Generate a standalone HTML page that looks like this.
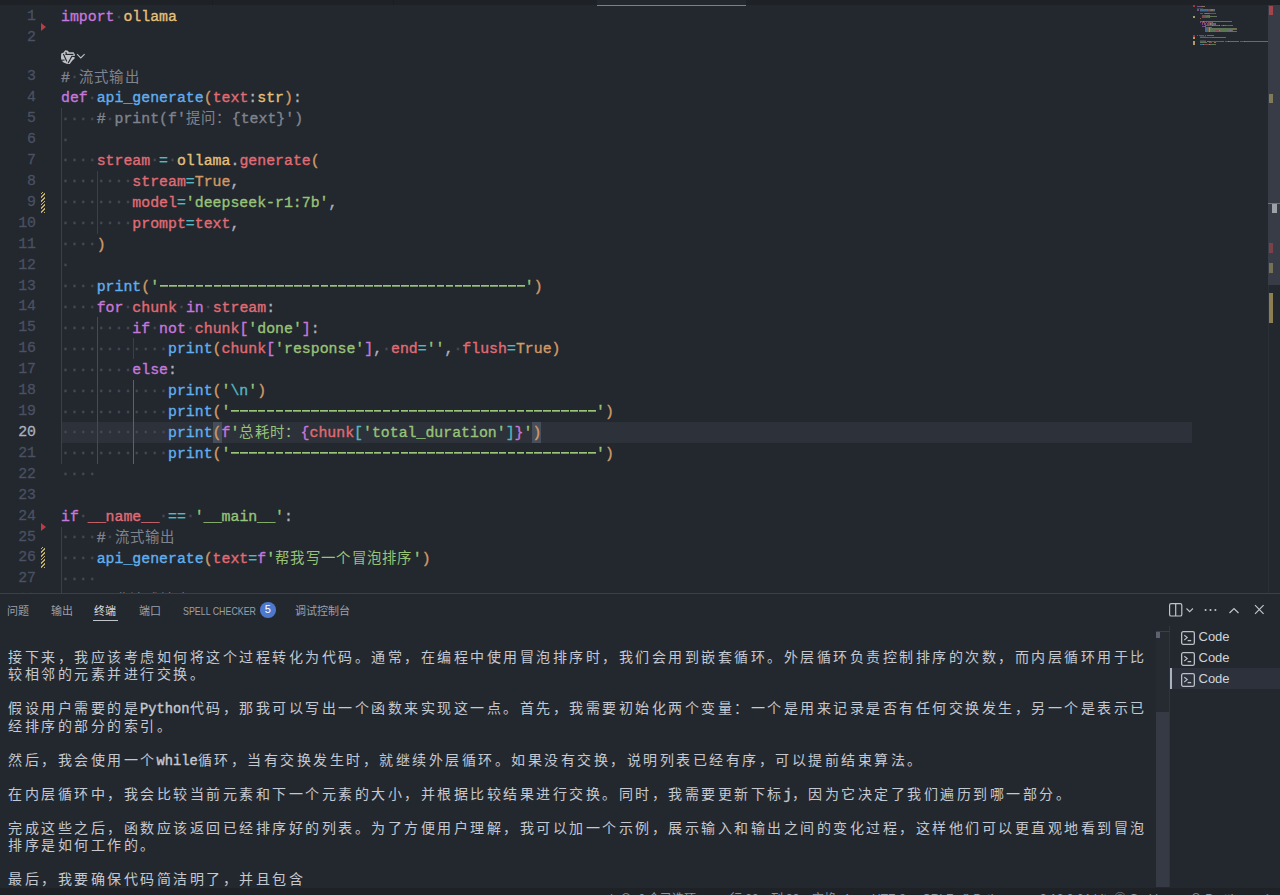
<!DOCTYPE html>
<html lang="zh-CN"><head><meta charset="utf-8">
<style>
html,body{margin:0;padding:0}
body{width:1280px;height:895px;overflow:hidden;background:#23272e;position:relative;font-family:"Liberation Sans",sans-serif}
.topband{position:absolute;left:0;top:0;width:1280px;height:5px;background:#1e2227}
.acttab{position:absolute;left:597px;top:0;width:149px;height:5px;background:#23272e;border-bottom:1px solid #7d8086}
.ed{position:absolute;left:0;top:5px;width:1280px;height:588px;overflow:hidden}
.edin{position:absolute;left:0;top:-5px;width:1280px;height:600px}
.ln{position:absolute;left:0;width:36px;text-align:right;color:#495162;font-family:"Liberation Mono",monospace;font-size:14.875px;line-height:20.92px;height:20.92px;white-space:pre;-webkit-text-stroke:0.3px currentColor}
.ln.act{color:#abb2bf}
.cl{position:absolute;z-index:1;left:61px;font-family:"Liberation Mono",monospace;font-size:14.875px;line-height:20.92px;height:20.92px;white-space:pre;color:#abb2bf;-webkit-text-stroke:0.35px currentColor}
.ws{color:#454a55;position:relative;top:-0.7px}
.dash{color:transparent;-webkit-text-stroke:0;background:repeating-linear-gradient(90deg,#98c379 0 7.7px,transparent 7.7px 8.925px) 0.6px 6.2px/100% 1.7px no-repeat}
.cj{font-style:normal;display:inline-block;width:15.3px;font-size:14.4px;-webkit-text-stroke:0}
.lhl{position:absolute;left:61px;width:1131px;height:20.92px;background:#2c313a}
.bx{position:relative}
.bx::before{content:"";position:absolute;left:0;top:-3.2px;width:100%;height:20.7px;background:#474e5b;z-index:-1}
.ig{position:absolute;width:1px;background:#3b4048}
.iga{background:#5c6370}
.igm{background:#454b56}
.glyph-del{position:absolute;left:41px;width:0;height:0;border-top:4px solid transparent;border-bottom:4px solid transparent;border-left:5px solid #b93c47}
.glyph-mod{position:absolute;left:41px;width:4px;background:repeating-linear-gradient(-45deg,#bfae6c 0 1.3px,#2a2c2e 1.3px 2.6px)}
.minimap{position:absolute;left:1192px;top:5px;width:76px;height:588px;overflow:hidden}
.sb{position:absolute;left:1268px;top:5px;width:12px;height:588px;background:#23272e;border-left:1px solid #2b2f36;box-sizing:border-box}
.sbslider{position:absolute;left:1268px;top:5px;width:12px;height:280px;background:#383c46}
.panel{position:absolute;left:0;top:593px;width:1280px;height:302px;background:#23272e;border-top:1px solid #3a3f4b;box-sizing:border-box}
.ptab{position:absolute;top:605px;font-size:11px;color:#9aa0ab;line-height:13px;white-space:nowrap}
.ptab.act{color:#d7dae0}
.tl{position:absolute;left:8px;height:17px;line-height:17px;white-space:pre;color:#c3c8d1;font-family:"Liberation Mono",monospace;font-size:13.75px}
.tcj{font-style:normal;display:inline-block;width:16.5px;font-size:14px;font-weight:300}
.tas{-webkit-text-stroke:0.4px currentColor}
.tsb{position:absolute;left:1156px;top:631px;width:14px;height:256px;background:#262a31}
.tsbslider{position:absolute;left:1156px;top:712px;width:14px;height:175px;background:#353a45}
.tabsep{position:absolute;left:1169px;top:626px;width:1px;height:261px;background:#2f343d}
.ttab{position:absolute;left:1170px;width:110px;height:21px}
.ttab.act{background:#2c313c}
.ttab .bar{position:absolute;left:0;top:0;width:2px;height:21px;background:#abb2bf}
.ttab .ic2{position:absolute;left:9.5px;top:3.5px}
.ttab .ic{position:absolute;left:10px;top:3px;width:12px;height:12px;border:1.3px solid #b9bec7;border-radius:2px}
.ttab .tx{position:absolute;left:28.5px;top:3px;font-size:13px;line-height:15px;color:#d0d4da}
.mm{position:absolute;height:1.2px}
.ovr{position:absolute}
.pic{position:absolute}
.status{position:absolute;left:0;top:888px;width:1280px;height:22px;background:#1e2227}
</style></head><body>
<div class="topband"></div>
<div class="acttab"></div>
<div style="position:absolute;left:212px;top:0;width:1px;height:5px;background:#1a1d22"></div>
<div style="position:absolute;left:393px;top:0;width:1px;height:5px;background:#1a1d22"></div>
<div class="ed"><div class="edin">
<div class="lhl" style="top:421.94px"></div>
<div class="ln" style="top:6.06px">1</div>
<div class="cl" style="top:7.26px"><span style="color:#c678dd">import</span><span class="ws">·</span><span style="color:#e5c07b">ollama</span></div>
<div class="ln" style="top:26.98px">2</div>
<div class="cl" style="top:28.18px"></div>
<div class="ln" style="top:66.30px">3</div>
<div class="cl" style="top:67.50px"><span style="color:#7f848e">#</span><span class="ws">·</span><span style="color:#7f848e"><i class="cj">流</i><i class="cj">式</i><i class="cj">输</i><i class="cj">出</i></span></div>
<div class="ln" style="top:87.22px">4</div>
<div class="cl" style="top:88.42px"><span style="color:#c678dd">def</span><span class="ws">·</span><span style="color:#61afef">api_generate</span><span style="color:#d19a66">(</span><span style="color:#e06c75">text</span><span style="color:#abb2bf">:</span><span style="color:#e5c07b">str</span><span style="color:#d19a66">)</span><span style="color:#abb2bf">:</span></div>
<div class="ln" style="top:108.14px">5</div>
<div class="cl" style="top:109.34px"><span class="ws">····</span><span style="color:#7f848e">#</span><span class="ws">·</span><span style="color:#7f848e">print(f&#x27;<i class="cj">提</i><i class="cj">问</i><i class="cj">：</i>{text}&#x27;)</span></div>
<div class="ln" style="top:129.06px">6</div>
<div class="cl" style="top:130.26px"><span class="ws">·</span></div>
<div class="ln" style="top:149.98px">7</div>
<div class="cl" style="top:151.18px"><span class="ws">····</span><span style="color:#e06c75">stream</span><span class="ws">·</span><span style="color:#56b6c2">=</span><span class="ws">·</span><span style="color:#e5c07b">ollama</span><span style="color:#abb2bf">.</span><span style="color:#e06c75">generate</span><span style="color:#d19a66">(</span></div>
<div class="ln" style="top:170.90px">8</div>
<div class="cl" style="top:172.10px"><span class="ws">········</span><span style="color:#e06c75">stream</span><span style="color:#56b6c2">=</span><span style="color:#d19a66">True</span><span style="color:#abb2bf">,</span></div>
<div class="ln" style="top:191.82px">9</div>
<div class="cl" style="top:193.02px"><span class="ws">········</span><span style="color:#e06c75">model</span><span style="color:#56b6c2">=</span><span style="color:#98c379">&#x27;deepseek-r1:7b&#x27;</span><span style="color:#abb2bf">,</span></div>
<div class="ln" style="top:212.74px">10</div>
<div class="cl" style="top:213.94px"><span class="ws">········</span><span style="color:#e06c75">prompt</span><span style="color:#56b6c2">=</span><span style="color:#e06c75">text</span><span style="color:#abb2bf">,</span></div>
<div class="ln" style="top:233.66px">11</div>
<div class="cl" style="top:234.86px"><span class="ws">····</span><span style="color:#d19a66">)</span></div>
<div class="ln" style="top:254.58px">12</div>
<div class="cl" style="top:255.78px"><span class="ws">·</span></div>
<div class="ln" style="top:275.50px">13</div>
<div class="cl" style="top:276.70px"><span class="ws">····</span><span style="color:#61afef">print</span><span style="color:#d19a66">(</span><span style="color:#98c379">&#x27;</span><span class="dash">-----------------------------------------</span><span style="color:#98c379">&#x27;</span><span style="color:#d19a66">)</span></div>
<div class="ln" style="top:296.42px">14</div>
<div class="cl" style="top:297.62px"><span class="ws">····</span><span style="color:#c678dd">for</span><span class="ws">·</span><span style="color:#e06c75">chunk</span><span class="ws">·</span><span style="color:#c678dd">in</span><span class="ws">·</span><span style="color:#e06c75">stream</span><span style="color:#abb2bf">:</span></div>
<div class="ln" style="top:317.34px">15</div>
<div class="cl" style="top:318.54px"><span class="ws">········</span><span style="color:#c678dd">if</span><span class="ws">·</span><span style="color:#c678dd">not</span><span class="ws">·</span><span style="color:#e06c75">chunk</span><span style="color:#c678dd">[</span><span style="color:#98c379">&#x27;done&#x27;</span><span style="color:#c678dd">]</span><span style="color:#abb2bf">:</span></div>
<div class="ln" style="top:338.26px">16</div>
<div class="cl" style="top:339.46px"><span class="ws">············</span><span style="color:#61afef">print</span><span style="color:#d19a66">(</span><span style="color:#e06c75">chunk</span><span style="color:#c678dd">[</span><span style="color:#98c379">&#x27;response&#x27;</span><span style="color:#c678dd">]</span><span style="color:#abb2bf">,</span><span class="ws">·</span><span style="color:#e06c75">end</span><span style="color:#56b6c2">=</span><span style="color:#98c379">&#x27;&#x27;</span><span style="color:#abb2bf">,</span><span class="ws">·</span><span style="color:#e06c75">flush</span><span style="color:#56b6c2">=</span><span style="color:#d19a66">True</span><span style="color:#d19a66">)</span></div>
<div class="ln" style="top:359.18px">17</div>
<div class="cl" style="top:360.38px"><span class="ws">········</span><span style="color:#c678dd">else</span><span style="color:#abb2bf">:</span></div>
<div class="ln" style="top:380.10px">18</div>
<div class="cl" style="top:381.30px"><span class="ws">············</span><span style="color:#61afef">print</span><span style="color:#d19a66">(</span><span style="color:#98c379">&#x27;</span><span style="color:#56b6c2">\n</span><span style="color:#98c379">&#x27;</span><span style="color:#d19a66">)</span></div>
<div class="ln" style="top:401.02px">19</div>
<div class="cl" style="top:402.22px"><span class="ws">············</span><span style="color:#61afef">print</span><span style="color:#d19a66">(</span><span style="color:#98c379">&#x27;</span><span class="dash">-----------------------------------------</span><span style="color:#98c379">&#x27;</span><span style="color:#d19a66">)</span></div>
<div class="ln act" style="top:421.94px">20</div>
<div class="cl" style="top:423.14px"><span class="ws">············</span><span style="color:#61afef">print</span><span class="bx" style="color:#d19a66">(</span><span style="color:#c678dd">f</span><span style="color:#98c379">&#x27;<i class="cj">总</i><i class="cj">耗</i><i class="cj">时</i><i class="cj">：</i></span><span style="color:#c678dd">{</span><span style="color:#e06c75">chunk</span><span style="color:#56b6c2">[</span><span style="color:#98c379">&#x27;total_duration&#x27;</span><span style="color:#56b6c2">]</span><span style="color:#c678dd">}</span><span style="color:#98c379">&#x27;</span><span class="bx" style="color:#d19a66">)</span></div>
<div class="ln" style="top:442.86px">21</div>
<div class="cl" style="top:444.06px"><span class="ws">············</span><span style="color:#61afef">print</span><span style="color:#d19a66">(</span><span style="color:#98c379">&#x27;</span><span class="dash">-----------------------------------------</span><span style="color:#98c379">&#x27;</span><span style="color:#d19a66">)</span></div>
<div class="ln" style="top:463.78px">22</div>
<div class="cl" style="top:464.98px"><span class="ws">····</span></div>
<div class="ln" style="top:484.70px">23</div>
<div class="cl" style="top:485.90px"></div>
<div class="ln" style="top:505.62px">24</div>
<div class="cl" style="top:506.82px"><span style="color:#c678dd">if</span><span class="ws">·</span><span style="color:#e06c75">__name__</span><span class="ws">·</span><span style="color:#56b6c2">==</span><span class="ws">·</span><span style="color:#98c379">&#x27;__main__&#x27;</span><span style="color:#abb2bf">:</span></div>
<div class="ln" style="top:526.54px">25</div>
<div class="cl" style="top:527.74px"><span class="ws">····</span><span style="color:#7f848e">#</span><span class="ws">·</span><span style="color:#7f848e"><i class="cj">流</i><i class="cj">式</i><i class="cj">输</i><i class="cj">出</i></span></div>
<div class="ln" style="top:547.46px">26</div>
<div class="cl" style="top:548.66px"><span class="ws">····</span><span style="color:#61afef">api_generate</span><span style="color:#d19a66">(</span><span style="color:#e06c75">text</span><span style="color:#56b6c2">=</span><span style="color:#c678dd">f</span><span style="color:#98c379">&#x27;<i class="cj">帮</i><i class="cj">我</i><i class="cj">写</i><i class="cj">一</i><i class="cj">个</i><i class="cj">冒</i><i class="cj">泡</i><i class="cj">排</i><i class="cj">序</i>&#x27;</span><span style="color:#d19a66">)</span></div>
<div class="ln" style="top:568.38px">27</div>
<div class="cl" style="top:569.58px"><span class="ws">····</span></div>
<div class="ln" style="top:589.30px">28</div>
<div class="cl" style="top:590.50px"><span class="ws">····</span><span style="color:#7f848e">#</span><span class="ws">·</span><span style="color:#7f848e"><i class="cj">非</i><i class="cj">流</i><i class="cj">式</i><i class="cj">输</i><i class="cj">出</i></span></div>
<div class="ig" style="left:61.0px;top:108.14px;height:355.64px"></div>
<div class="ig" style="left:97.0px;top:170.90px;height:62.76px"></div>
<div class="ig igm" style="left:97.0px;top:317.34px;height:146.44px"></div>
<div class="ig" style="left:133.0px;top:338.26px;height:20.92px"></div>
<div class="ig iga" style="left:133.0px;top:380.10px;height:83.68px"></div>
<div class="ig" style="left:61.0px;top:526.54px;height:83.68px"></div>
<div class="glyph-del" style="top:22.98px"></div>
<div class="glyph-del" style="top:522.54px"></div>
<div class="glyph-mod" style="top:191.82px;height:20.92px"></div>
<div class="glyph-mod" style="top:547.46px;height:20.92px"></div>
<svg class="lens" style="position:absolute;left:59px;top:48.00px" width="28" height="18" viewBox="0 0 28 18">
<path d="M6.2 2.2 L9 2.8 L9.8 4.2 L14.6 4.2 L15.9 6.6 L15.6 10.6 L13.2 12.8 L10.8 16 L7.6 15.8 L4.6 14.6 L2.4 12.6 L2 9.6 L2.2 5.6 L4.6 4.4 Z" fill="#bfc2c7"/>
<g stroke="#23272e" stroke-width="1.15" fill="none">
<path d="M6.4 6.4 L14.4 6.4"/>
<path d="M4.4 6.0 L7.8 13.4"/>
<path d="M13 8 L9.2 15"/>
<path d="M6.9 4.0 L7.3 6.2"/>
<path d="M1.8 12.4 L5.6 12.0"/>
<path d="M16 8.6 L12.8 8.2"/>
</g>
<path d="M18 6.2 L21.8 10 L25.6 6.2" fill="none" stroke="#b9bec7" stroke-width="1.1"/>
</svg>
</div></div>
<div class="mm" style="left:1197.00px;top:5.70px;width:3.84px;background:#c678dd;opacity:0.50"></div>
<div class="mm" style="left:1201.48px;top:5.70px;width:3.84px;background:#e5c07b;opacity:0.50"></div>
<div class="mm" style="left:1197.00px;top:8.22px;width:0.64px;background:#7f848e;opacity:0.30"></div>
<div class="mm" style="left:1198.28px;top:8.22px;width:5.12px;background:#7f848e;opacity:0.30"></div>
<div class="mm" style="left:1197.00px;top:9.48px;width:1.92px;background:#c678dd;opacity:0.50"></div>
<div class="mm" style="left:1199.56px;top:9.48px;width:7.68px;background:#61afef;opacity:0.50"></div>
<div class="mm" style="left:1207.24px;top:9.48px;width:0.64px;background:#d19a66;opacity:0.50"></div>
<div class="mm" style="left:1207.88px;top:9.48px;width:2.56px;background:#e06c75;opacity:0.50"></div>
<div class="mm" style="left:1210.44px;top:9.48px;width:0.64px;background:#abb2bf;opacity:0.50"></div>
<div class="mm" style="left:1211.08px;top:9.48px;width:1.92px;background:#e5c07b;opacity:0.50"></div>
<div class="mm" style="left:1213.00px;top:9.48px;width:0.64px;background:#d19a66;opacity:0.50"></div>
<div class="mm" style="left:1213.64px;top:9.48px;width:0.64px;background:#abb2bf;opacity:0.50"></div>
<div class="mm" style="left:1199.56px;top:10.74px;width:0.64px;background:#7f848e;opacity:0.30"></div>
<div class="mm" style="left:1200.84px;top:10.74px;width:14.08px;background:#7f848e;opacity:0.30"></div>
<div class="mm" style="left:1199.56px;top:13.26px;width:3.84px;background:#e06c75;opacity:0.50"></div>
<div class="mm" style="left:1204.04px;top:13.26px;width:0.64px;background:#56b6c2;opacity:0.50"></div>
<div class="mm" style="left:1205.32px;top:13.26px;width:3.84px;background:#e5c07b;opacity:0.50"></div>
<div class="mm" style="left:1209.16px;top:13.26px;width:0.64px;background:#abb2bf;opacity:0.50"></div>
<div class="mm" style="left:1209.80px;top:13.26px;width:5.12px;background:#e06c75;opacity:0.50"></div>
<div class="mm" style="left:1214.92px;top:13.26px;width:0.64px;background:#d19a66;opacity:0.50"></div>
<div class="mm" style="left:1202.12px;top:14.52px;width:3.84px;background:#e06c75;opacity:0.50"></div>
<div class="mm" style="left:1205.96px;top:14.52px;width:0.64px;background:#56b6c2;opacity:0.50"></div>
<div class="mm" style="left:1206.60px;top:14.52px;width:2.56px;background:#d19a66;opacity:0.50"></div>
<div class="mm" style="left:1209.16px;top:14.52px;width:0.64px;background:#abb2bf;opacity:0.50"></div>
<div class="mm" style="left:1202.12px;top:15.78px;width:3.20px;background:#e06c75;opacity:0.50"></div>
<div class="mm" style="left:1205.32px;top:15.78px;width:0.64px;background:#56b6c2;opacity:0.50"></div>
<div class="mm" style="left:1205.96px;top:15.78px;width:10.24px;background:#98c379;opacity:0.50"></div>
<div class="mm" style="left:1216.20px;top:15.78px;width:0.64px;background:#abb2bf;opacity:0.50"></div>
<div class="mm" style="left:1202.12px;top:17.04px;width:3.84px;background:#e06c75;opacity:0.50"></div>
<div class="mm" style="left:1205.96px;top:17.04px;width:0.64px;background:#56b6c2;opacity:0.50"></div>
<div class="mm" style="left:1206.60px;top:17.04px;width:2.56px;background:#e06c75;opacity:0.50"></div>
<div class="mm" style="left:1209.16px;top:17.04px;width:0.64px;background:#abb2bf;opacity:0.50"></div>
<div class="mm" style="left:1199.56px;top:18.30px;width:0.64px;background:#d19a66;opacity:0.50"></div>
<div class="mm" style="left:1199.56px;top:20.82px;width:3.20px;background:#61afef;opacity:0.50"></div>
<div class="mm" style="left:1202.76px;top:20.82px;width:0.64px;background:#d19a66;opacity:0.50"></div>
<div class="mm" style="left:1203.40px;top:20.82px;width:0.64px;background:#98c379;opacity:0.50"></div>
<div class="mm" style="left:1204.04px;top:20.82px;width:26.24px;background:#98c379;opacity:0.50"></div>
<div class="mm" style="left:1230.28px;top:20.82px;width:0.64px;background:#98c379;opacity:0.50"></div>
<div class="mm" style="left:1230.92px;top:20.82px;width:0.64px;background:#d19a66;opacity:0.50"></div>
<div class="mm" style="left:1199.56px;top:22.08px;width:1.92px;background:#c678dd;opacity:0.50"></div>
<div class="mm" style="left:1202.12px;top:22.08px;width:3.20px;background:#e06c75;opacity:0.50"></div>
<div class="mm" style="left:1205.96px;top:22.08px;width:1.28px;background:#c678dd;opacity:0.50"></div>
<div class="mm" style="left:1207.88px;top:22.08px;width:3.84px;background:#e06c75;opacity:0.50"></div>
<div class="mm" style="left:1211.72px;top:22.08px;width:0.64px;background:#abb2bf;opacity:0.50"></div>
<div class="mm" style="left:1202.12px;top:23.34px;width:1.28px;background:#c678dd;opacity:0.50"></div>
<div class="mm" style="left:1204.04px;top:23.34px;width:1.92px;background:#c678dd;opacity:0.50"></div>
<div class="mm" style="left:1206.60px;top:23.34px;width:3.20px;background:#e06c75;opacity:0.50"></div>
<div class="mm" style="left:1209.80px;top:23.34px;width:0.64px;background:#c678dd;opacity:0.50"></div>
<div class="mm" style="left:1210.44px;top:23.34px;width:3.84px;background:#98c379;opacity:0.50"></div>
<div class="mm" style="left:1214.28px;top:23.34px;width:0.64px;background:#c678dd;opacity:0.50"></div>
<div class="mm" style="left:1214.92px;top:23.34px;width:0.64px;background:#abb2bf;opacity:0.50"></div>
<div class="mm" style="left:1204.68px;top:24.60px;width:3.20px;background:#61afef;opacity:0.50"></div>
<div class="mm" style="left:1207.88px;top:24.60px;width:0.64px;background:#d19a66;opacity:0.50"></div>
<div class="mm" style="left:1208.52px;top:24.60px;width:3.20px;background:#e06c75;opacity:0.50"></div>
<div class="mm" style="left:1211.72px;top:24.60px;width:0.64px;background:#c678dd;opacity:0.50"></div>
<div class="mm" style="left:1212.36px;top:24.60px;width:6.40px;background:#98c379;opacity:0.50"></div>
<div class="mm" style="left:1218.76px;top:24.60px;width:0.64px;background:#c678dd;opacity:0.50"></div>
<div class="mm" style="left:1219.40px;top:24.60px;width:0.64px;background:#abb2bf;opacity:0.50"></div>
<div class="mm" style="left:1220.68px;top:24.60px;width:1.92px;background:#e06c75;opacity:0.50"></div>
<div class="mm" style="left:1222.60px;top:24.60px;width:0.64px;background:#56b6c2;opacity:0.50"></div>
<div class="mm" style="left:1223.24px;top:24.60px;width:1.28px;background:#98c379;opacity:0.50"></div>
<div class="mm" style="left:1224.52px;top:24.60px;width:0.64px;background:#abb2bf;opacity:0.50"></div>
<div class="mm" style="left:1225.80px;top:24.60px;width:3.20px;background:#e06c75;opacity:0.50"></div>
<div class="mm" style="left:1229.00px;top:24.60px;width:0.64px;background:#56b6c2;opacity:0.50"></div>
<div class="mm" style="left:1229.64px;top:24.60px;width:2.56px;background:#d19a66;opacity:0.50"></div>
<div class="mm" style="left:1232.20px;top:24.60px;width:0.64px;background:#d19a66;opacity:0.50"></div>
<div class="mm" style="left:1202.12px;top:25.86px;width:2.56px;background:#c678dd;opacity:0.50"></div>
<div class="mm" style="left:1204.68px;top:25.86px;width:0.64px;background:#abb2bf;opacity:0.50"></div>
<div class="mm" style="left:1204.68px;top:27.12px;width:3.20px;background:#61afef;opacity:0.50"></div>
<div class="mm" style="left:1207.88px;top:27.12px;width:0.64px;background:#d19a66;opacity:0.50"></div>
<div class="mm" style="left:1208.52px;top:27.12px;width:0.64px;background:#98c379;opacity:0.50"></div>
<div class="mm" style="left:1209.16px;top:27.12px;width:1.28px;background:#56b6c2;opacity:0.50"></div>
<div class="mm" style="left:1210.44px;top:27.12px;width:0.64px;background:#98c379;opacity:0.50"></div>
<div class="mm" style="left:1211.08px;top:27.12px;width:0.64px;background:#d19a66;opacity:0.50"></div>
<div class="mm" style="left:1204.68px;top:28.38px;width:3.20px;background:#61afef;opacity:0.50"></div>
<div class="mm" style="left:1207.88px;top:28.38px;width:0.64px;background:#d19a66;opacity:0.50"></div>
<div class="mm" style="left:1208.52px;top:28.38px;width:0.64px;background:#98c379;opacity:0.50"></div>
<div class="mm" style="left:1209.16px;top:28.38px;width:26.24px;background:#98c379;opacity:0.50"></div>
<div class="mm" style="left:1235.40px;top:28.38px;width:0.64px;background:#98c379;opacity:0.50"></div>
<div class="mm" style="left:1236.04px;top:28.38px;width:0.64px;background:#d19a66;opacity:0.50"></div>
<div class="mm" style="left:1204.68px;top:29.64px;width:3.20px;background:#61afef;opacity:0.50"></div>
<div class="mm" style="left:1207.88px;top:29.64px;width:0.64px;background:#d19a66;opacity:0.50"></div>
<div class="mm" style="left:1208.52px;top:29.64px;width:0.64px;background:#c678dd;opacity:0.50"></div>
<div class="mm" style="left:1209.16px;top:29.64px;width:5.76px;background:#98c379;opacity:0.50"></div>
<div class="mm" style="left:1214.92px;top:29.64px;width:0.64px;background:#c678dd;opacity:0.50"></div>
<div class="mm" style="left:1215.56px;top:29.64px;width:3.20px;background:#e06c75;opacity:0.50"></div>
<div class="mm" style="left:1218.76px;top:29.64px;width:0.64px;background:#56b6c2;opacity:0.50"></div>
<div class="mm" style="left:1219.40px;top:29.64px;width:10.24px;background:#98c379;opacity:0.50"></div>
<div class="mm" style="left:1229.64px;top:29.64px;width:0.64px;background:#56b6c2;opacity:0.50"></div>
<div class="mm" style="left:1230.28px;top:29.64px;width:0.64px;background:#c678dd;opacity:0.50"></div>
<div class="mm" style="left:1230.92px;top:29.64px;width:0.64px;background:#98c379;opacity:0.50"></div>
<div class="mm" style="left:1231.56px;top:29.64px;width:0.64px;background:#d19a66;opacity:0.50"></div>
<div class="mm" style="left:1204.68px;top:30.90px;width:3.20px;background:#61afef;opacity:0.50"></div>
<div class="mm" style="left:1207.88px;top:30.90px;width:0.64px;background:#d19a66;opacity:0.50"></div>
<div class="mm" style="left:1208.52px;top:30.90px;width:0.64px;background:#98c379;opacity:0.50"></div>
<div class="mm" style="left:1209.16px;top:30.90px;width:26.24px;background:#98c379;opacity:0.50"></div>
<div class="mm" style="left:1235.40px;top:30.90px;width:0.64px;background:#98c379;opacity:0.50"></div>
<div class="mm" style="left:1236.04px;top:30.90px;width:0.64px;background:#d19a66;opacity:0.50"></div>
<div class="mm" style="left:1197.00px;top:34.68px;width:1.28px;background:#c678dd;opacity:0.50"></div>
<div class="mm" style="left:1198.92px;top:34.68px;width:5.12px;background:#e06c75;opacity:0.50"></div>
<div class="mm" style="left:1204.68px;top:34.68px;width:1.28px;background:#56b6c2;opacity:0.50"></div>
<div class="mm" style="left:1206.60px;top:34.68px;width:6.40px;background:#98c379;opacity:0.50"></div>
<div class="mm" style="left:1213.00px;top:34.68px;width:0.64px;background:#abb2bf;opacity:0.50"></div>
<div class="mm" style="left:1199.56px;top:35.94px;width:0.64px;background:#7f848e;opacity:0.30"></div>
<div class="mm" style="left:1200.84px;top:35.94px;width:5.12px;background:#7f848e;opacity:0.30"></div>
<div class="mm" style="left:1199.56px;top:37.20px;width:7.68px;background:#61afef;opacity:0.50"></div>
<div class="mm" style="left:1207.24px;top:37.20px;width:0.64px;background:#d19a66;opacity:0.50"></div>
<div class="mm" style="left:1207.88px;top:37.20px;width:2.56px;background:#e06c75;opacity:0.50"></div>
<div class="mm" style="left:1210.44px;top:37.20px;width:0.64px;background:#56b6c2;opacity:0.50"></div>
<div class="mm" style="left:1211.08px;top:37.20px;width:0.64px;background:#c678dd;opacity:0.50"></div>
<div class="mm" style="left:1211.72px;top:37.20px;width:12.80px;background:#98c379;opacity:0.50"></div>
<div class="mm" style="left:1224.52px;top:37.20px;width:0.64px;background:#d19a66;opacity:0.50"></div>
<div class="mm" style="left:1199.56px;top:39.72px;width:6.40px;background:#7f848e;opacity:0.30"></div>
<div class="mm" style="left:1199.56px;top:40.98px;width:5.12px;background:#e06c75;opacity:0.50"></div>
<div class="mm" style="left:1205.32px;top:40.98px;width:0.64px;background:#56b6c2;opacity:0.50"></div>
<div class="mm" style="left:1206.60px;top:40.98px;width:3.84px;background:#e5c07b;opacity:0.50"></div>
<div class="mm" style="left:1210.44px;top:40.98px;width:0.64px;background:#abb2bf;opacity:0.50"></div>
<div class="mm" style="left:1211.08px;top:40.98px;width:5.12px;background:#e06c75;opacity:0.50"></div>
<div class="mm" style="left:1216.20px;top:40.98px;width:0.64px;background:#d19a66;opacity:0.50"></div>
<div class="mm" style="left:1216.84px;top:40.98px;width:3.20px;background:#e06c75;opacity:0.50"></div>
<div class="mm" style="left:1220.04px;top:40.98px;width:0.64px;background:#56b6c2;opacity:0.50"></div>
<div class="mm" style="left:1220.68px;top:40.98px;width:3.20px;background:#d19a66;opacity:0.50"></div>
<div class="mm" style="left:1224.52px;top:40.98px;width:3.20px;background:#e06c75;opacity:0.50"></div>
<div class="mm" style="left:1227.72px;top:40.98px;width:0.64px;background:#56b6c2;opacity:0.50"></div>
<div class="mm" style="left:1228.36px;top:40.98px;width:10.88px;background:#98c379;opacity:0.50"></div>
<div class="mm" style="left:1239.88px;top:40.98px;width:3.84px;background:#e06c75;opacity:0.50"></div>
<div class="mm" style="left:1243.72px;top:40.98px;width:0.64px;background:#56b6c2;opacity:0.50"></div>
<div class="mm" style="left:1244.36px;top:40.98px;width:0.64px;background:#c678dd;opacity:0.50"></div>
<div class="mm" style="left:1245.00px;top:40.98px;width:23.00px;background:#98c379;opacity:0.50"></div>
<div class="mm" style="left:1199.56px;top:42.24px;width:7.68px;background:#98c379;opacity:0.50"></div>
<div class="mm" style="left:1208.52px;top:42.24px;width:3.84px;background:#e06c75;opacity:0.50"></div>
<div class="mm" style="left:1213.64px;top:42.24px;width:2.56px;background:#e5c07b;opacity:0.50"></div>
<div class="mm" style="left:1199.56px;top:43.50px;width:3.20px;background:#61afef;opacity:0.50"></div>
<div class="mm" style="left:1202.76px;top:43.50px;width:0.64px;background:#d19a66;opacity:0.50"></div>
<div class="mm" style="left:1203.40px;top:43.50px;width:5.12px;background:#e06c75;opacity:0.50"></div>
<div class="mm" style="left:1208.52px;top:43.50px;width:0.64px;background:#c678dd;opacity:0.50"></div>
<div class="mm" style="left:1209.16px;top:43.50px;width:6.40px;background:#98c379;opacity:0.50"></div>
<div class="mm" style="left:1192.5px;top:5.30px;width:2px;height:2.00px;background:#c3353f;opacity:.85"></div>
<div class="mm" style="left:1192.5px;top:15.50px;width:2px;height:2.00px;background:#c9b26d;opacity:.85"></div>
<div class="mm" style="left:1192.5px;top:34.50px;width:2px;height:2.00px;background:#c3353f;opacity:.85"></div>
<div class="mm" style="left:1192.5px;top:37.00px;width:2px;height:2.00px;background:#c9b26d;opacity:.85"></div>
<div class="mm" style="left:1192.5px;top:41.00px;width:2px;height:4.00px;background:#c9b26d;opacity:.85"></div>
<div class="sb"></div>
<div class="sbslider"></div>
<div class="ovr" style="left:1268.5px;top:6px;width:4px;height:9px;background:#a2454d"></div>
<div class="ovr" style="left:1268.5px;top:94px;width:4px;height:9px;background:#7f7a59"></div>
<div class="ovr" style="left:1268px;top:202.5px;width:12px;height:1.5px;background:#4d78cc"></div>
<div class="ovr" style="left:1272px;top:204px;width:5px;height:9px;background:#9ea2a8"></div>
<div class="ovr" style="left:1268.5px;top:243px;width:4px;height:10px;background:#7a4149"></div>
<div class="ovr" style="left:1268.5px;top:263px;width:4px;height:10px;background:#757155"></div>
<div class="ovr" style="left:1268.5px;top:293px;width:4px;height:30px;background:#8c7f53"></div>
<div class="panel"></div>
<div class="ptab" style="left:7px">问题</div>
<div class="ptab" style="left:51px">输出</div>
<div class="ptab act" style="left:94px">终端</div>
<div class="ptab" style="left:139px">端口</div>
<div class="ptab" style="left:183px;transform-origin:0 0;transform:scaleX(0.805)">SPELL CHECKER</div>
<div class="ptab" style="left:295px">调试控制台</div>
<div style="position:absolute;left:93px;top:620px;width:25px;height:1px;background:#c0c4cb"></div>
<div style="position:absolute;left:260px;top:602px;width:15.5px;height:15.5px;border-radius:50%;background:#4d78cc;color:#fff;font-size:11px;line-height:15.5px;text-align:center">5</div>
<svg class="pic" style="left:1168px;top:602px" width="100" height="16" viewBox="0 0 100 16">
<rect x="1.6" y="1.6" width="12.2" height="12.4" rx="1.6" fill="none" stroke="#c0c4cb" stroke-width="1.2"/>
<line x1="7.7" y1="1.6" x2="7.7" y2="14" stroke="#c0c4cb" stroke-width="1.2"/>
<path d="M18.5 6.5 L21.7 9.7 L24.9 6.5" fill="none" stroke="#c0c4cb" stroke-width="1.1"/>
<circle cx="37.6" cy="8" r="1.05" fill="#c0c4cb"/><circle cx="42.5" cy="8" r="1.05" fill="#c0c4cb"/><circle cx="47.4" cy="8" r="1.05" fill="#c0c4cb"/>
<path d="M61.5 11 L66 6.5 L70.5 11" fill="none" stroke="#c0c4cb" stroke-width="1.2"/>
<path d="M87 3.2 L95.6 11.8 M95.6 3.2 L87 11.8" fill="none" stroke="#c0c4cb" stroke-width="1.2"/>
</svg>
<div class="tl" style="top:650.10px"><i class="tcj">接</i><i class="tcj">下</i><i class="tcj">来</i><i class="tcj">，</i><i class="tcj">我</i><i class="tcj">应</i><i class="tcj">该</i><i class="tcj">考</i><i class="tcj">虑</i><i class="tcj">如</i><i class="tcj">何</i><i class="tcj">将</i><i class="tcj">这</i><i class="tcj">个</i><i class="tcj">过</i><i class="tcj">程</i><i class="tcj">转</i><i class="tcj">化</i><i class="tcj">为</i><i class="tcj">代</i><i class="tcj">码</i><i class="tcj">。</i><i class="tcj">通</i><i class="tcj">常</i><i class="tcj">，</i><i class="tcj">在</i><i class="tcj">编</i><i class="tcj">程</i><i class="tcj">中</i><i class="tcj">使</i><i class="tcj">用</i><i class="tcj">冒</i><i class="tcj">泡</i><i class="tcj">排</i><i class="tcj">序</i><i class="tcj">时</i><i class="tcj">，</i><i class="tcj">我</i><i class="tcj">们</i><i class="tcj">会</i><i class="tcj">用</i><i class="tcj">到</i><i class="tcj">嵌</i><i class="tcj">套</i><i class="tcj">循</i><i class="tcj">环</i><i class="tcj">。</i><i class="tcj">外</i><i class="tcj">层</i><i class="tcj">循</i><i class="tcj">环</i><i class="tcj">负</i><i class="tcj">责</i><i class="tcj">控</i><i class="tcj">制</i><i class="tcj">排</i><i class="tcj">序</i><i class="tcj">的</i><i class="tcj">次</i><i class="tcj">数</i><i class="tcj">，</i><i class="tcj">而</i><i class="tcj">内</i><i class="tcj">层</i><i class="tcj">循</i><i class="tcj">环</i><i class="tcj">用</i><i class="tcj">于</i><i class="tcj">比</i></div>
<div class="tl" style="top:667.20px"><i class="tcj">较</i><i class="tcj">相</i><i class="tcj">邻</i><i class="tcj">的</i><i class="tcj">元</i><i class="tcj">素</i><i class="tcj">并</i><i class="tcj">进</i><i class="tcj">行</i><i class="tcj">交</i><i class="tcj">换</i><i class="tcj">。</i></div>
<div class="tl" style="top:701.40px"><i class="tcj">假</i><i class="tcj">设</i><i class="tcj">用</i><i class="tcj">户</i><i class="tcj">需</i><i class="tcj">要</i><i class="tcj">的</i><i class="tcj">是</i><span class="tas">Python</span><i class="tcj">代</i><i class="tcj">码</i><i class="tcj">，</i><i class="tcj">那</i><i class="tcj">我</i><i class="tcj">可</i><i class="tcj">以</i><i class="tcj">写</i><i class="tcj">出</i><i class="tcj">一</i><i class="tcj">个</i><i class="tcj">函</i><i class="tcj">数</i><i class="tcj">来</i><i class="tcj">实</i><i class="tcj">现</i><i class="tcj">这</i><i class="tcj">一</i><i class="tcj">点</i><i class="tcj">。</i><i class="tcj">首</i><i class="tcj">先</i><i class="tcj">，</i><i class="tcj">我</i><i class="tcj">需</i><i class="tcj">要</i><i class="tcj">初</i><i class="tcj">始</i><i class="tcj">化</i><i class="tcj">两</i><i class="tcj">个</i><i class="tcj">变</i><i class="tcj">量</i><i class="tcj">：</i><i class="tcj">一</i><i class="tcj">个</i><i class="tcj">是</i><i class="tcj">用</i><i class="tcj">来</i><i class="tcj">记</i><i class="tcj">录</i><i class="tcj">是</i><i class="tcj">否</i><i class="tcj">有</i><i class="tcj">任</i><i class="tcj">何</i><i class="tcj">交</i><i class="tcj">换</i><i class="tcj">发</i><i class="tcj">生</i><i class="tcj">，</i><i class="tcj">另</i><i class="tcj">一</i><i class="tcj">个</i><i class="tcj">是</i><i class="tcj">表</i><i class="tcj">示</i><i class="tcj">已</i></div>
<div class="tl" style="top:718.50px"><i class="tcj">经</i><i class="tcj">排</i><i class="tcj">序</i><i class="tcj">的</i><i class="tcj">部</i><i class="tcj">分</i><i class="tcj">的</i><i class="tcj">索</i><i class="tcj">引</i><i class="tcj">。</i></div>
<div class="tl" style="top:752.70px"><i class="tcj">然</i><i class="tcj">后</i><i class="tcj">，</i><i class="tcj">我</i><i class="tcj">会</i><i class="tcj">使</i><i class="tcj">用</i><i class="tcj">一</i><i class="tcj">个</i><span class="tas">while</span><i class="tcj">循</i><i class="tcj">环</i><i class="tcj">，</i><i class="tcj">当</i><i class="tcj">有</i><i class="tcj">交</i><i class="tcj">换</i><i class="tcj">发</i><i class="tcj">生</i><i class="tcj">时</i><i class="tcj">，</i><i class="tcj">就</i><i class="tcj">继</i><i class="tcj">续</i><i class="tcj">外</i><i class="tcj">层</i><i class="tcj">循</i><i class="tcj">环</i><i class="tcj">。</i><i class="tcj">如</i><i class="tcj">果</i><i class="tcj">没</i><i class="tcj">有</i><i class="tcj">交</i><i class="tcj">换</i><i class="tcj">，</i><i class="tcj">说</i><i class="tcj">明</i><i class="tcj">列</i><i class="tcj">表</i><i class="tcj">已</i><i class="tcj">经</i><i class="tcj">有</i><i class="tcj">序</i><i class="tcj">，</i><i class="tcj">可</i><i class="tcj">以</i><i class="tcj">提</i><i class="tcj">前</i><i class="tcj">结</i><i class="tcj">束</i><i class="tcj">算</i><i class="tcj">法</i><i class="tcj">。</i></div>
<div class="tl" style="top:786.90px"><i class="tcj">在</i><i class="tcj">内</i><i class="tcj">层</i><i class="tcj">循</i><i class="tcj">环</i><i class="tcj">中</i><i class="tcj">，</i><i class="tcj">我</i><i class="tcj">会</i><i class="tcj">比</i><i class="tcj">较</i><i class="tcj">当</i><i class="tcj">前</i><i class="tcj">元</i><i class="tcj">素</i><i class="tcj">和</i><i class="tcj">下</i><i class="tcj">一</i><i class="tcj">个</i><i class="tcj">元</i><i class="tcj">素</i><i class="tcj">的</i><i class="tcj">大</i><i class="tcj">小</i><i class="tcj">，</i><i class="tcj">并</i><i class="tcj">根</i><i class="tcj">据</i><i class="tcj">比</i><i class="tcj">较</i><i class="tcj">结</i><i class="tcj">果</i><i class="tcj">进</i><i class="tcj">行</i><i class="tcj">交</i><i class="tcj">换</i><i class="tcj">。</i><i class="tcj">同</i><i class="tcj">时</i><i class="tcj">，</i><i class="tcj">我</i><i class="tcj">需</i><i class="tcj">要</i><i class="tcj">更</i><i class="tcj">新</i><i class="tcj">下</i><i class="tcj">标</i><span class="tas">j</span><i class="tcj">，</i><i class="tcj">因</i><i class="tcj">为</i><i class="tcj">它</i><i class="tcj">决</i><i class="tcj">定</i><i class="tcj">了</i><i class="tcj">我</i><i class="tcj">们</i><i class="tcj">遍</i><i class="tcj">历</i><i class="tcj">到</i><i class="tcj">哪</i><i class="tcj">一</i><i class="tcj">部</i><i class="tcj">分</i><i class="tcj">。</i></div>
<div class="tl" style="top:821.10px"><i class="tcj">完</i><i class="tcj">成</i><i class="tcj">这</i><i class="tcj">些</i><i class="tcj">之</i><i class="tcj">后</i><i class="tcj">，</i><i class="tcj">函</i><i class="tcj">数</i><i class="tcj">应</i><i class="tcj">该</i><i class="tcj">返</i><i class="tcj">回</i><i class="tcj">已</i><i class="tcj">经</i><i class="tcj">排</i><i class="tcj">序</i><i class="tcj">好</i><i class="tcj">的</i><i class="tcj">列</i><i class="tcj">表</i><i class="tcj">。</i><i class="tcj">为</i><i class="tcj">了</i><i class="tcj">方</i><i class="tcj">便</i><i class="tcj">用</i><i class="tcj">户</i><i class="tcj">理</i><i class="tcj">解</i><i class="tcj">，</i><i class="tcj">我</i><i class="tcj">可</i><i class="tcj">以</i><i class="tcj">加</i><i class="tcj">一</i><i class="tcj">个</i><i class="tcj">示</i><i class="tcj">例</i><i class="tcj">，</i><i class="tcj">展</i><i class="tcj">示</i><i class="tcj">输</i><i class="tcj">入</i><i class="tcj">和</i><i class="tcj">输</i><i class="tcj">出</i><i class="tcj">之</i><i class="tcj">间</i><i class="tcj">的</i><i class="tcj">变</i><i class="tcj">化</i><i class="tcj">过</i><i class="tcj">程</i><i class="tcj">，</i><i class="tcj">这</i><i class="tcj">样</i><i class="tcj">他</i><i class="tcj">们</i><i class="tcj">可</i><i class="tcj">以</i><i class="tcj">更</i><i class="tcj">直</i><i class="tcj">观</i><i class="tcj">地</i><i class="tcj">看</i><i class="tcj">到</i><i class="tcj">冒</i><i class="tcj">泡</i></div>
<div class="tl" style="top:838.20px"><i class="tcj">排</i><i class="tcj">序</i><i class="tcj">是</i><i class="tcj">如</i><i class="tcj">何</i><i class="tcj">工</i><i class="tcj">作</i><i class="tcj">的</i><i class="tcj">。</i></div>
<div class="tl" style="top:872.40px"><i class="tcj">最</i><i class="tcj">后</i><i class="tcj">，</i><i class="tcj">我</i><i class="tcj">要</i><i class="tcj">确</i><i class="tcj">保</i><i class="tcj">代</i><i class="tcj">码</i><i class="tcj">简</i><i class="tcj">洁</i><i class="tcj">明</i><i class="tcj">了</i><i class="tcj">，</i><i class="tcj">并</i><i class="tcj">且</i><i class="tcj">包</i><i class="tcj">含</i></div>
<div class="tsb"></div>
<div class="tsbslider"></div>
<div class="tabsep"></div>
<div style="position:absolute;left:1156px;top:631px;width:14px;height:1px;background:#3a3f4b"></div>
<div style="position:absolute;left:1156px;top:632px;width:4px;height:6px;background:#5c6370"></div>
<div class="ttab" style="top:626px"><svg class="ic2" width="16" height="16" viewBox="0 0 16 16"><rect x="1.65" y="1.65" width="12.7" height="12.7" rx="1.6" fill="none" stroke="#b9bec7" stroke-width="1.3"/><path d="M4.3 5.2 L7.2 7.6 L4.3 10" fill="none" stroke="#b9bec7" stroke-width="1.2"/><path d="M7.6 10.6 H11.2" stroke="#b9bec7" stroke-width="1.3"/></svg><div class="tx">Code</div></div>
<div class="ttab" style="top:647px"><svg class="ic2" width="16" height="16" viewBox="0 0 16 16"><rect x="1.65" y="1.65" width="12.7" height="12.7" rx="1.6" fill="none" stroke="#b9bec7" stroke-width="1.3"/><path d="M4.3 5.2 L7.2 7.6 L4.3 10" fill="none" stroke="#b9bec7" stroke-width="1.2"/><path d="M7.6 10.6 H11.2" stroke="#b9bec7" stroke-width="1.3"/></svg><div class="tx">Code</div></div>
<div class="ttab act" style="top:668px"><div class="bar"></div><svg class="ic2" width="16" height="16" viewBox="0 0 16 16"><rect x="1.65" y="1.65" width="12.7" height="12.7" rx="1.6" fill="none" stroke="#b9bec7" stroke-width="1.3"/><path d="M4.3 5.2 L7.2 7.6 L4.3 10" fill="none" stroke="#b9bec7" stroke-width="1.2"/><path d="M7.6 10.6 H11.2" stroke="#b9bec7" stroke-width="1.3"/></svg><div class="tx">Code</div></div>
<div class="status"></div>
<div style="position:absolute;left:0;top:891px;width:1280px;height:4px;overflow:hidden">
<div style="position:absolute;top:0.5px;left:0;width:1280px;font-size:12px;line-height:14px;color:#8a919c;white-space:pre">
<span style="position:absolute;top:0;left:610px">|  ⊙  0 个已选项 ⅹ</span><span style="position:absolute;top:0;left:730px">行 20，列 39</span><span style="position:absolute;top:0;left:812px">空格: 4</span><span style="position:absolute;top:0;left:872px">UTF-8</span><span style="position:absolute;top:0;left:922px">CRLF</span><span style="position:absolute;top:0;left:962px">{} Python</span><span style="position:absolute;top:0;left:1040px">3.12.0 64-bit</span><span style="position:absolute;top:0;left:1114px">◎ Go Live</span><span style="position:absolute;top:0;left:1190px">⊘ Prettier</span><span style="position:absolute;top:0;left:1262px">♙</span>
</div></div>
</body></html>
